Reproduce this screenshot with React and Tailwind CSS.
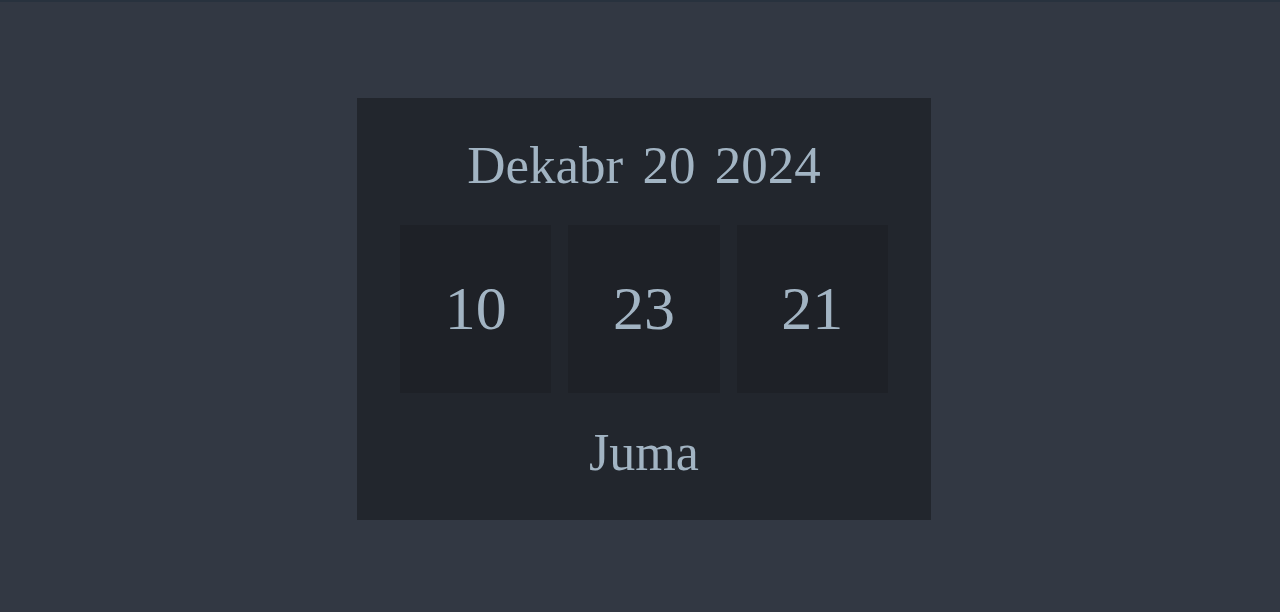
export default function App() {
  const parts = ["10", "23", "21"];

  return (
    <div className="min-h-[612px] bg-[#323843] border-t-2 border-[#28323e] flex justify-center pl-2 pt-[96px]" style={{ fontFamily: '"Liberation Serif", "Times New Roman", serif' }}>
      <div className="w-[574px] h-[422px] bg-[#22262d] px-[43px] flex flex-col text-[#a2b4c3]">
        <div className="h-[127px] flex items-center justify-center pt-[8px] text-[53px] leading-none [word-spacing:6px]">
          Dekabr 20 2024
        </div>
        <div className="grid grid-cols-3 gap-[17px]">
          {parts.map(p => (
            <div key={p} className="h-[168px] bg-[#1e2127] flex items-center justify-center text-[62px] leading-none pb-[2px]">
              {p}
            </div>
          ))}
        </div>
        <div className="flex-1 flex items-center justify-center text-[52px] leading-none pb-[8px]">
          Juma
        </div>
      </div>
    </div>
  );
}
